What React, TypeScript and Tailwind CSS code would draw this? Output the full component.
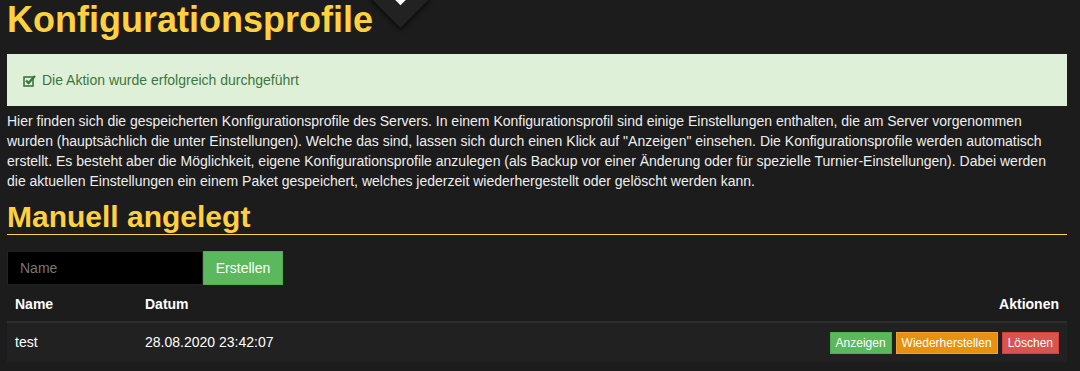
import React from "react";

const font = { fontFamily: '"Liberation Sans", Arial, sans-serif' };

function CheckIcon() {
  return (
    <svg className="mr-[6px] inline-block" width="13" height="13" viewBox="0 0 13 13">
      <rect x="1" y="3" width="9" height="9" fill="none" stroke="#3c763d" strokeWidth="1.6" />
      <path d="M3 6.5 L5.5 9 L12 2" fill="none" stroke="#3c763d" strokeWidth="2.4" />
    </svg>
  );
}

export default function App() {
  return (
    <div className="relative min-h-[371px] w-full overflow-hidden bg-[#1c1c1c] text-[#eeeeee]" style={font}>
      {/* nav toggle chevron */}
      <div className="absolute left-[379px] top-[-24px] h-[43px] w-[43px] rotate-45 bg-[#222222] shadow-[2px_2px_4px_rgba(0,0,0,0.6)]" />
      <div className="absolute left-[395px] top-[-8px] h-[11px] w-[11px] rotate-45 bg-white" />

      <div className="px-[7px] pr-[13px]">
        <h1 className="pt-[1px] text-[36px] font-bold leading-[37px] text-[#ffd03f]">Konfigurationsprofile</h1>

        <div className="mt-[16px] flex h-[52px] items-center bg-[#dff0d8] pl-[16px] text-[14px] text-[#3c763d]">
          <CheckIcon />
          <span>Die Aktion wurde erfolgreich durchgeführt</span>
        </div>

        <p className="mt-[5px] text-[14px] leading-[20px]">
          Hier finden sich die gespeicherten Konfigurationsprofile des Servers. In einem Konfigurationsprofil sind einige Einstellungen enthalten, die am Server vorgenommen
          <br />
          wurden (hauptsächlich die unter Einstellungen). Welche das sind, lassen sich durch einen Klick auf "Anzeigen" einsehen. Die Konfigurationsprofile werden automatisch
          <br />
          erstellt. Es besteht aber die Möglichkeit, eigene Konfigurationsprofile anzulegen (als Backup vor einer Änderung oder für spezielle Turnier-Einstellungen). Dabei werden
          <br />
          die aktuellen Einstellungen ein einem Paket gespeichert, welches jederzeit wiederhergestellt oder gelöscht werden kann.
        </p>

        <h2 className="mt-[9px] border-b border-[#ffd03f] pb-[1px] text-[30px] font-bold leading-[33px] text-[#ffd03f]">
          Manuell angelegt
        </h2>

        <div className="mt-[16px] flex">
          <input
            className="h-[34px] w-[196px] border border-[#222222] bg-black px-[12px] text-[14px] text-white placeholder:text-[#777777] focus:outline-none"
            placeholder="Name"
            style={font}
            type="text"
          />
          <button className="h-[34px] w-[80px] border border-[#4cae4c] bg-[#5cb85c] text-[14px] text-white" type="button">
            Erstellen
          </button>
        </div>

        <table className="mt-[2px] w-full border-collapse text-[14px]">
          <thead>
            <tr className="h-[35px] font-bold text-white">
              <th className="w-[130px] px-[8px] text-left">Name</th>
              <th className="px-[8px] text-left">Datum</th>
              <th className="px-[8px] text-right">Aktionen</th>
            </tr>
          </thead>
          <tbody>
            <tr className="h-[40px] border-t-[2px] border-[#2e2e2e] bg-[#212121] text-white">
              <td className="px-[8px]">test</td>
              <td className="px-[8px]">28.08.2020 23:42:07</td>
              <td className="px-[8px] text-right">
                <div className="flex justify-end gap-[4px] text-[12px]">
                  <button className="h-[22px] border border-[#4cae4c] bg-[#5cb85c] px-[5px] text-white" type="button">
                    Anzeigen
                  </button>
                  <button className="h-[22px] border border-[#eea236] bg-[#e8900f] px-[5px] text-white" type="button">
                    Wiederherstellen
                  </button>
                  <button className="h-[22px] border border-[#d43f3a] bg-[#d9534f] px-[5px] text-white" type="button">
                    Löschen
                  </button>
                </div>
              </td>
            </tr>
          </tbody>
        </table>
      </div>
    </div>
  );
}
